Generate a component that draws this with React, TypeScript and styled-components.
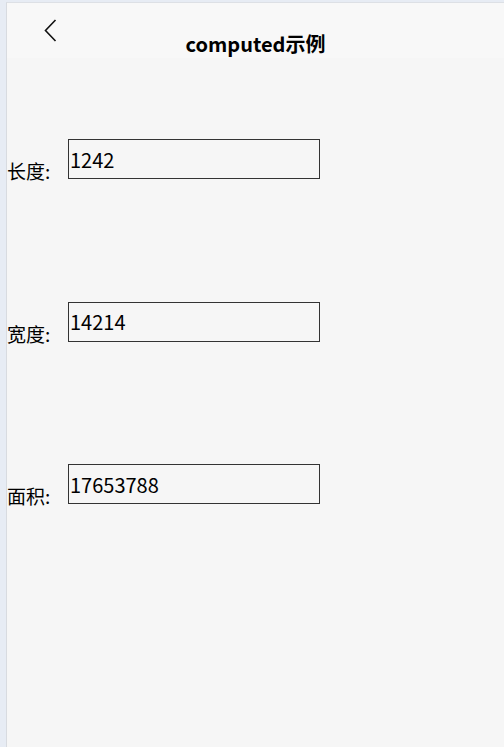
import React from "react";
import styled, { createGlobalStyle } from "styled-components";

const GlobalStyle = createGlobalStyle`
  html, body {
    margin: 0;
    padding: 0;
    height: 100%;
    background: #e7ecf4;
  }
  #root {
    height: 100%;
  }
`;

const Frame = styled.div`
  box-sizing: border-box;
  height: 100%;
  margin-left: 6px;
  padding-top: 2px;
`;

const Page = styled.div`
  box-sizing: border-box;
  height: 100%;
  background: #f6f6f6;
  border-left: 1px solid #d8dbe0;
  border-top: 1px solid #dde0e5;
  font-family: "Noto Sans CJK SC", "Noto Sans", sans-serif;
  color: #000;
`;

const NavBar = styled.header`
  display: grid;
  grid-template-columns: 1fr auto 1fr;
  height: 55px;
  background: #f8f8f8;
`;

const BackButton = styled.button`
  justify-self: start;
  align-self: start;
  margin: 15px 0 0 35px;
  padding: 0;
  border: none;
  background: none;
  width: 16px;
  height: 24px;
  cursor: pointer;
`;

const Title = styled.h1`
  grid-column: 2;
  align-self: end;
  margin: 0 0 1px;
  font-size: 20px;
  line-height: 26px;
  font-weight: 700;
`;

const Form = styled.div`
  display: flex;
  flex-direction: column;
  gap: 122.5px;
  padding-top: 81px;
`;

const Row = styled.div`
  display: flex;
  align-items: flex-end;
`;

const Label = styled.label`
  width: 61px;
  font-size: 19px;
  line-height: 19px;
  margin-bottom: -1px;
`;

const Field = styled.input`
  box-sizing: border-box;
  width: 252px;
  height: 40px;
  margin: 0;
  padding: 0 1px;
  border: 1px solid #333;
  background: transparent;
  font-family: "Noto Sans CJK SC", "Noto Sans", sans-serif;
  font-size: 20px;
  color: #000;
  outline: none;
`;

function Chevron() {
  return (
    <svg width="16" height="24" viewBox="0 0 16 24" fill="none">
      <path d="M13.5 2 L3.5 12.5 L13.5 23" stroke="#111" strokeWidth="1.6" />
    </svg>
  );
}

export default function App() {
  const [length, setLength] = React.useState(1242);
  const [width, setWidth] = React.useState(14214);
  const area = React.useMemo(() => length * width, [length, width]);

  return (
    <Frame>
      <GlobalStyle />
      <Page>
        <NavBar>
          <BackButton aria-label="返回">
            <Chevron />
          </BackButton>
          <Title>computed示例</Title>
        </NavBar>
        <Form>
          <Row>
            <Label>长度:</Label>
            <Field
              value={length}
              onChange={(e) => setLength(Number(e.target.value) || 0)}
            />
          </Row>
          <Row>
            <Label>宽度:</Label>
            <Field
              value={width}
              onChange={(e) => setWidth(Number(e.target.value) || 0)}
            />
          </Row>
          <Row>
            <Label>面积:</Label>
            <Field value={area} readOnly />
          </Row>
        </Form>
      </Page>
    </Frame>
  );
}
